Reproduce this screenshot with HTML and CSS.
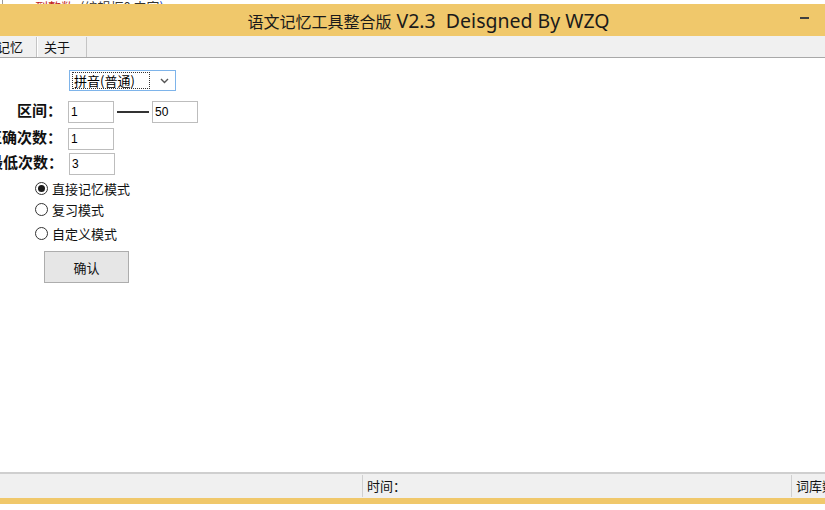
FILE: index.html
```html
<!DOCTYPE html>
<html lang="zh">
<head>
<meta charset="utf-8">
<title>语文记忆工具整合版</title>
<link rel="stylesheet" href="styles.css">
</head>
<body>
<div class="window">
  <div class="behind">
    <span class="behind-red">到整数</span><span class="behind-dark">(编辑框0 内容<span class="behind-blue">)</span></span>
  </div>
  <div class="titlebar">
    <div class="title"><span class="title-cn">语文记忆工具整合版</span><span class="title-en"> V2.3&nbsp;&nbsp;Deisgned By WZQ</span></div>
    <div class="minimize"></div>
  </div>
  <div class="tabs">
    <div class="tab tab-first">记忆</div>
    <div class="tab">关于</div>
  </div>
  <div class="content">
    <div class="combo">
      <div class="combo-text"><span class="focus">拼音(普通)</span></div>
      <svg class="chev" width="9" height="6" viewBox="0 0 9 6"><path d="M1 1 L4.5 4.5 L8 1" fill="none" stroke="#555" stroke-width="1.4"/></svg>
    </div>
    <div class="row row-range">
      <div class="label">区间：</div>
      <div class="input">1</div>
      <div class="dash"></div>
      <div class="input">50</div>
    </div>
    <div class="row row-correct">
      <div class="label">正确次数：</div>
      <div class="input">1</div>
    </div>
    <div class="row row-min">
      <div class="label label-min">最低次数：</div>
      <div class="input">3</div>
    </div>
    <div class="radios">
      <div class="radio radio-1"><span class="circle checked"></span>直接记忆模式</div>
      <div class="radio radio-2"><span class="circle"></span>复习模式</div>
      <div class="radio radio-3"><span class="circle"></span>自定义模式</div>
    </div>
    <div class="button">确认</div>
  </div>
  <div class="statusbar">
    <div class="status-left"></div>
    <div class="status-cell status-time">时间：</div>
    <div class="status-cell status-lib">词库数量：</div>
  </div>
  <div class="bottom-yellow"></div>
  <div class="bottom-white"></div>
</div>
</body>
</html>
```
FILE: styles.css
```css
* { box-sizing: border-box; }
html, body {
  margin: 0;
  padding: 0;
  background: #ffffff;
}
body {
  width: 825px;
  height: 510px;
  overflow: hidden;
  font-family: "Noto Sans CJK SC", "Noto Sans", sans-serif;
  color: #000;
}
.window {
  display: flex;
  flex-direction: column;
  width: 825px;
  height: 510px;
}
.behind {
  height: 4px;
  overflow: hidden;
  background: #fff;
  border-left: 1px solid #9a9a9a;
  margin-left: 2px;
  flex: none;
  font-size: 13px;
  line-height: 13px;
  white-space: nowrap;
}
.behind-red, .behind-dark {
  display: inline-block;
  margin-top: -9px;
}
.behind-red { color: #c02020; margin-left: 32px; }
.behind-dark { color: #333; margin-left: 6px; }
.behind-blue { color: #2040c0; }

.titlebar {
  flex: none;
  height: 32px;
  background: #f0c86b;
  position: relative;
  display: flex;
  align-items: center;
  justify-content: center;
}
.title {
  color: #1a1a1a;
  margin-left: 32px;
  white-space: nowrap;
  display: flex;
  align-items: baseline;
}
.title-cn {
  font-family: "Noto Sans CJK SC", sans-serif;
  font-size: 16px;
}
.title-en {
  font-family: "Noto Sans", sans-serif;
  font-size: 19.5px;
  white-space: pre;
}
.minimize {
  position: absolute;
  left: 800px;
  top: 13px;
  width: 9px;
  height: 2px;
  background: #404040;
}

.tabs {
  flex: none;
  height: 22px;
  background: #f0f0f0;
  border-bottom: 1px solid #a8a8a8;
  display: flex;
  align-items: flex-end;
}
.tab {
  height: 20px;
  padding: 0 0 0 6px;
  width: 50px;
  font-size: 13px;
  line-height: 19px;
  border-right: 1px solid #c4c4c4;
  border-left: 1px solid #ffffff;
  color: #111;
}
.tab-first {
  margin-left: -14px;
  width: 51px;
  padding-left: 10px;
}

.content {
  flex: 1;
  background: #fff;
  font-size: 13px;
}
.combo {
  margin: 12px 0 0 69px;
  width: 107px;
  height: 21px;
  border: 1px solid #7eb4ea;
  background: #fff;
  display: flex;
  align-items: center;
  padding: 0 6px 0 2px;
}
.combo-text {
  flex: 1;
  height: 17px;
  border: 1px dotted #333;
  font-size: 13px;
  line-height: 15px;
  padding-left: 1px;
  margin-right: 10px;
}
.chev { flex: none; }

.row {
  display: flex;
  align-items: center;
  height: 22px;
}
.row-range { margin-top: 10px; }
.row-correct { margin-top: 5px; }
.row-min { margin-top: 3px; }
.label {
  width: 62px;
  display: flex;
  justify-content: flex-end;
  white-space: nowrap;
  font-weight: bold;
  font-size: 15px;
  margin-right: 6px;
  padding-bottom: 5px;
  color: #111;
}
.label-min { width: 63px; }
.input {
  width: 46px;
  height: 22px;
  border: 1px solid #bdbdbd;
  background: #fff;
  font-family: "Liberation Sans", Arial, sans-serif;
  font-size: 12px;
  line-height: 20px;
  padding-left: 2px;
  color: #000;
}
.dash {
  width: 32px;
  height: 2px;
  background: #333;
  margin: 0 3px 0 3px;
}

.radios {
  margin-top: 4px;
  margin-left: 35px;
}
.radio {
  display: flex;
  align-items: center;
  height: 18px;
  font-size: 13px;
  color: #111;
}
.radio-2 { margin-top: 3px; }
.radio-3 { margin-top: 6px; }
.circle {
  width: 13px;
  height: 13px;
  border: 1px solid #333;
  border-radius: 50%;
  margin-right: 4px;
  background: #fff;
  position: relative;
  flex: none;
}
.circle.checked::after {
  content: "";
  position: absolute;
  left: 2px;
  top: 2px;
  width: 7px;
  height: 7px;
  border-radius: 50%;
  background: #1a1a1a;
}

.button {
  margin: 9px 0 0 44px;
  width: 85px;
  height: 32px;
  border: 1px solid #adadad;
  background: #e6e6e6;
  display: flex;
  align-items: center;
  justify-content: center;
  font-size: 13px;
  color: #111;
}

.statusbar {
  flex: none;
  height: 26px;
  background: #f0f0f0;
  border-top: 2px solid #cfcfcf;
  display: flex;
  align-items: center;
  font-size: 13px;
  overflow: hidden;
}
.status-left { width: 362px; flex: none; height: 100%; }
.status-cell {
  height: 22px;
  border-left: 1px solid #d0d0d0;
  padding-left: 4px;
  line-height: 22px;
  white-space: nowrap;
  color: #111;
  flex: none;
}
.status-time { width: 429px; }
.status-lib { width: 60px; }

.bottom-yellow {
  flex: none;
  height: 6px;
  background: #f0c86b;
}
.bottom-white {
  flex: none;
  height: 6px;
  background: #fff;
}
```
